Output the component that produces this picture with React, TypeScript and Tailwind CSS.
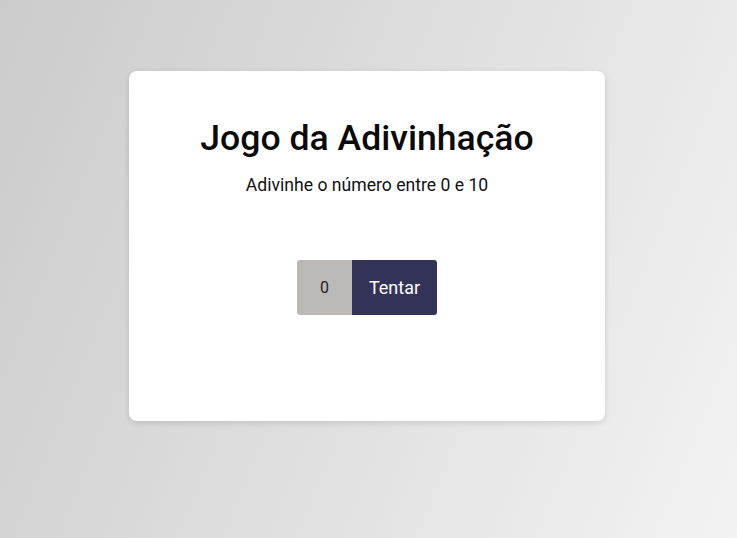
import React from "react";

export default function App() {
  return (
    <div
      className="w-[737px] h-[538px] flex justify-center bg-[linear-gradient(112deg,#cbcbcb,#f3f3f3)]"
      style={{ fontFamily: "Roboto, 'Liberation Sans', sans-serif" }}
    >
      <div className="mt-[71px] w-[476px] h-[350px] bg-white rounded-[8px] shadow-[0_2px_6px_rgba(0,0,0,0.12)] flex flex-col items-center pt-[46px] ml-[-3px]">
        <h1 className="text-[35.6px] leading-[42px] font-medium text-[#0a0a0a]">Jogo da Adivinhação</h1>
        <p className="mt-[13px] text-[17.6px] leading-[26px] text-[#111]">Adivinhe o número entre 0 e 10</p>
        <div className="mt-[62px] flex rounded-[3px] overflow-hidden">
          <input
            type="text"
            defaultValue="0"
            className="w-[55px] h-[55px] bg-[#bcb8b8] text-center text-[16px] text-[#222] outline-none"
          />
          <button className="w-[85px] h-[55px] bg-[#33335a] text-white text-[18px]">Tentar</button>
        </div>
      </div>
    </div>
  );
}
